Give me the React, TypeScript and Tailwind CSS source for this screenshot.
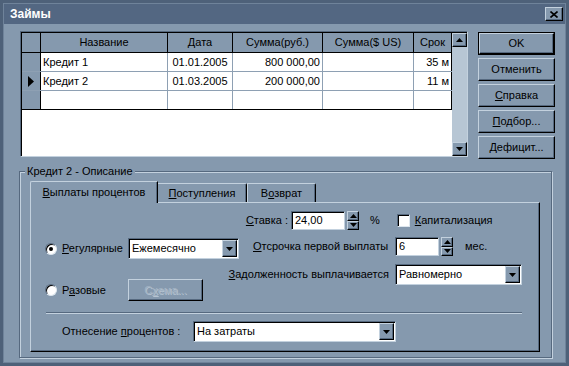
import React from 'react'

const raised =
  'border border-t-[#c3d1de] border-l-[#c3d1de] border-r-black border-b-black shadow-[inset_-1px_-1px_0_#56697f]'
const sunken =
  'border border-t-[#56697f] border-l-[#56697f] border-r-[#c3d1de] border-b-[#c3d1de] shadow-[inset_1px_1px_0_#000]'

function Arrow({ up = false }: { up?: boolean }) {
  return (
    <svg width="7" height="4" viewBox="0 0 7 4">
      {up ? <polygon points="0,4 7,4 3.5,0" fill="#000" /> : <polygon points="0,0 7,0 3.5,4" fill="#000" />}
    </svg>
  )
}

function Combo({ value, w }: { value: string; w: string }) {
  return (
    <div className={`${sunken} ${w} shrink-0 h-[21px] bg-white flex items-stretch p-[1px] pl-[2px]`}>
      <div className="flex-1 flex items-center pl-[1px] leading-none whitespace-nowrap">{value}</div>
      <div className={`${raised} w-[15px] bg-[#8599ae] flex items-center justify-center`}>
        <Arrow />
      </div>
    </div>
  )
}

function Spin() {
  return (
    <div className="flex flex-col w-[12px] h-[19px] shrink-0">
      <div className={`${raised} flex-1 bg-[#8599ae] flex items-center justify-center`}>
        <Arrow up />
      </div>
      <div className={`${raised} flex-1 bg-[#8599ae] flex items-center justify-center`}>
        <Arrow />
      </div>
    </div>
  )
}

function Field({ value, w }: { value: string; w: string }) {
  return <div className={`${sunken} ${w} shrink-0 h-[19px] bg-white flex items-center pl-[3px]`}>{value}</div>
}

function Radio({ on = false }: { on?: boolean }) {
  return (
    <div className="w-[12px] h-[12px] shrink-0 rounded-full border border-t-[#56697f] border-l-[#56697f] border-r-[#dde6ee] border-b-[#dde6ee] bg-white shadow-[inset_1px_1px_0_#000] flex items-center justify-center">
      {on && <div className="w-[4px] h-[4px] rounded-full bg-black" />}
    </div>
  )
}

function Btn({ children, def = false, disabled = false, w = 'w-[77px]', h = 'h-[23px]' }: any) {
  const inner = (
    <div
      className={`${raised} ${def ? 'w-full h-full' : `${w} ${h}`} shrink-0 bg-[#8599ae] flex items-center justify-center whitespace-nowrap ${
        disabled ? 'text-[#a3b3c3] [text-shadow:1px_1px_0_#b6c4d2]' : 'text-black'
      }`}
    >
      {children}
    </div>
  )
  if (def) return <div className={`${w} ${h} border border-black`}>{inner}</div>
  return inner
}

const cols = [
  { title: 'Название', w: 'w-[127px]' },
  { title: 'Дата', w: 'w-[65px]' },
  { title: 'Сумма(руб.)', w: 'w-[90px]' },
  { title: 'Сумма($ US)', w: 'w-[91px]' },
  { title: 'Срок', w: 'w-[38px]' },
]

const rows = [
  ['Кредит 1', '01.01.2005', '800 000,00', '', '35 м'],
  ['Кредит 2', '01.03.2005', '200 000,00', '', '11 м'],
  ['', '', '', '', ''],
]

export default function App() {
  return (
    <div className="w-[569px] h-[366px] bg-[#4e6179] p-[3px] font-['Liberation_Sans',Arial,sans-serif] text-[11px] text-black overflow-hidden">
      <div className="w-full h-full border border-[#6f839a] bg-[#8599ae] flex flex-col">
        {/* title bar */}
        <div className="h-[20px] bg-[#536782] flex items-center justify-between pl-[6px] pr-[2px]">
          <span className="text-white font-bold text-[12px]">Займы</span>
          <div className={`${raised} w-[18px] h-[14px] bg-[#8599ae] flex items-center justify-center`}>
            <svg width="8" height="7" viewBox="0 0 8 7">
              <path d="M0.5 0.5 L7.5 6.5 M7.5 0.5 L0.5 6.5" stroke="#000" strokeWidth="1.6" />
            </svg>
          </div>
        </div>

        <div className="flex pl-[16px] pt-[7px]">
          {/* grid */}
          <div className="w-[448px] h-[126px] border border-t-[#56697f] border-l-[#56697f] border-r-[#c3d1de] border-b-[#c3d1de] flex">
            <div className="flex-1 border-t border-l border-black bg-white flex flex-col">
              <div className="flex h-[20px] bg-[#8599ae] border-b border-black">
                <div className="w-[19px] border-r border-black" />
                {cols.map((c) => (
                  <div key={c.title} className={`${c.w} border-r border-black flex items-center justify-center`}>
                    {c.title}
                  </div>
                ))}
              </div>
              {rows.map((r, i) => (
                <div
                  key={i}
                  className={`flex h-[19px] border-b ${i === rows.length - 1 ? 'border-black' : 'border-[#8ea0b3]'} w-[430px]`}
                >
                  <div className="w-[19px] bg-[#8599ae] border-r border-black flex items-center justify-center">
                    {i === 1 && (
                      <svg width="6" height="11" viewBox="0 0 6 11">
                        <polygon points="0,0 6,5.5 0,11" fill="#000" />
                      </svg>
                    )}
                  </div>
                  {r.map((v, j) => (
                    <div
                      key={j}
                      className={`${cols[j].w} border-r ${j === 4 ? 'border-black' : 'border-[#8ea0b3]'} flex items-center px-[2px] ${
                        j === 0 ? 'justify-start' : j === 1 ? 'justify-center' : 'justify-end'
                      }`}
                    >
                      {v}
                    </div>
                  ))}
                </div>
              ))}
              <div className="w-[430px] flex-1" />
            </div>
            {/* scrollbar */}
            <div className="w-[15px] bg-[#b7c6d4] border-t border-black flex flex-col justify-between">
              <div className={`${raised} h-[14px] bg-[#8599ae] flex items-center justify-center`}>
                <Arrow up />
              </div>
              <div className={`${raised} h-[14px] bg-[#8599ae] flex items-center justify-center`}>
                <Arrow />
              </div>
            </div>
          </div>

          {/* buttons */}
          <div className="ml-[10px] mt-[1px] flex flex-col gap-[3px]">
            <Btn def>OK</Btn>
            <Btn>Отменить</Btn>
            <Btn>
              <u>С</u>правка
            </Btn>
            <Btn>
              <u>П</u>одбор...
            </Btn>
            <Btn>
              <u>Д</u>ефицит...
            </Btn>
          </div>
        </div>

        {/* group box */}
        <div className="relative ml-[15px] mt-[12px] w-[533px] h-[187px] border border-[#56697f] shadow-[1px_1px_0_#c3d1de,inset_1px_1px_0_#c3d1de] pl-[10px] pt-[9px]">
          <span className="absolute left-[5px] top-[-8px] bg-[#8599ae] px-[2px] leading-[14px] whitespace-nowrap">
            Кредит 2 - Описание
          </span>

          {/* tabs */}
          <div className="flex items-end h-[21px] relative z-10">
            <div className="w-[128px] h-[22px] bg-[#8599ae] border-t border-l border-[#c3d1de] border-r border-r-black shadow-[inset_-1px_0_0_#56697f] flex items-center justify-center mb-[-1px] rounded-tl-[2px] whitespace-nowrap">
              <span>
                <u>В</u>ыплаты процентов
              </span>
            </div>
            <div className="w-[89px] h-[19px] border-t border-[#c3d1de] border-r border-r-black shadow-[inset_-1px_0_0_#56697f] flex items-center justify-center rounded-tr-[2px] whitespace-nowrap">
              <span>
                <u>П</u>оступления
              </span>
            </div>
            <div className="w-[69px] h-[19px] border-t border-l border-[#c3d1de] border-r border-r-black shadow-[inset_-1px_0_0_#56697f] flex items-center justify-center rounded-tr-[2px] whitespace-nowrap">
              <span>
                В<u>о</u>зврат
              </span>
            </div>
          </div>

          {/* tab page */}
          <div className="w-[510px] h-[150px] border border-t-[#c3d1de] border-l-[#c3d1de] border-r-black border-b-black shadow-[inset_-1px_-1px_0_#56697f] flex flex-col whitespace-nowrap">
            <div className="flex items-center mt-[8px] ml-[200px] h-[19px]">
              <div className="w-[57px] shrink-0 text-right">
                <u>С</u>тавка :
              </div>
              <div className="ml-[3px]">
                <Field value="24,00" w="w-[54px]" />
              </div>
              <div className="ml-[2px]">
                <Spin />
              </div>
              <span className="ml-[11px]">%</span>
              <div className="ml-[17px] w-[13px] h-[13px] shrink-0 bg-white border border-t-[#56697f] border-l-[#56697f] border-r-[#dde6ee] border-b-[#dde6ee] shadow-[inset_1px_1px_0_#000]" />
              <span className="ml-[5px]">
                <u>К</u>апитализация
              </span>
            </div>

            <div className="flex mt-[7px]">
              <div className="ml-[14px] w-[208px] shrink-0 flex flex-col pt-[1px]">
                <div className="flex items-center h-[21px]">
                  <Radio on />
                  <span className="ml-[5px] w-[66px] shrink-0">
                    <u>Р</u>егулярные
                  </span>
                  <Combo value="Ежемесячно" w="w-[111px]" />
                </div>
                <div className="flex items-center h-[22px] mt-[20px]">
                  <Radio />
                  <span className="ml-[5px] w-[66px] shrink-0">
                    Р<u>а</u>зовые
                  </span>
                  <Btn disabled w="w-[75px]" h="h-[22px]">
                    С<u>х</u>ема...
                  </Btn>
                </div>
              </div>
              <div className="flex flex-col">
                <div className="flex items-center h-[19px]">
                  <span className="w-[142px] shrink-0">
                    <u>О</u>тсрочка первой выплаты
                  </span>
                  <Field value="6" w="w-[44px]" />
                  <div className="ml-[2px]">
                    <Spin />
                  </div>
                  <span className="ml-[12px]">мес.</span>
                </div>
                <div className="flex items-center h-[21px] mt-[8px] ml-[-30px]">
                  <span className="w-[172px] shrink-0 text-right pr-[6px]">
                    <u>З</u>адолженность выплачивается
                  </span>
                  <Combo value="Равномерно" w="w-[127px]" />
                </div>
              </div>
            </div>

            <div className="ml-[15px] mt-[11px] w-[476px] h-[2px] border-t border-[#56697f] border-b border-b-[#c3d1de]" />

            <div className="flex items-center mt-[7px] ml-[31px] h-[21px]">
              <span className="w-[131px] shrink-0">
                Отнесение <u>п</u>роцентов :
              </span>
              <Combo value="На затраты" w="w-[203px]" />
            </div>
          </div>
        </div>
      </div>
    </div>
  )
}
